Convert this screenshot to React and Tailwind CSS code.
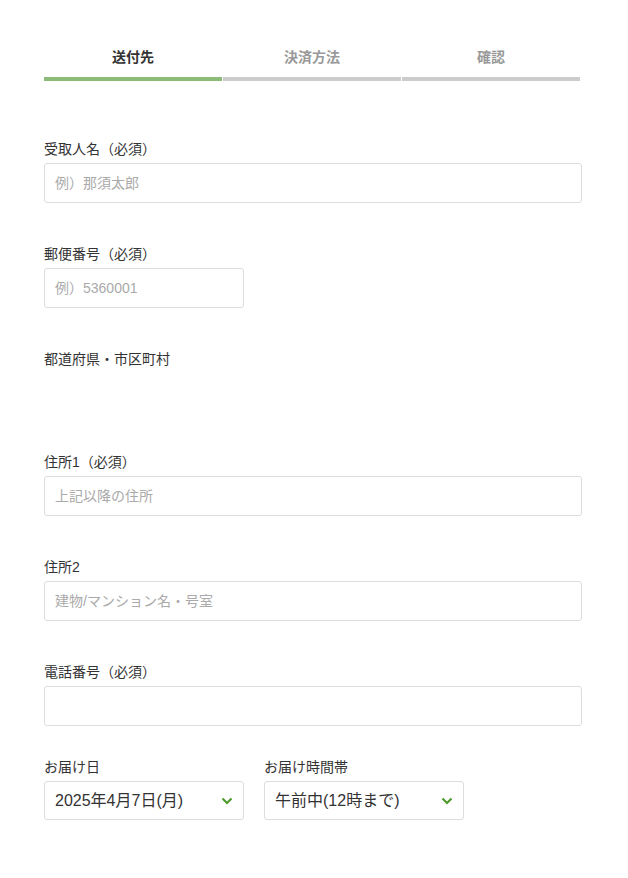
const tabs = [
  { label: "送付先", active: true },
  { label: "決済方法", active: false },
  { label: "確認", active: false },
];

const Chevron = () => (
  <svg width="12" height="8" viewBox="0 0 12 8" className="shrink-0">
    <path d="M1.5 1.5 L6 6 L10.5 1.5" fill="none" stroke="#4f9a2c" strokeWidth="2.2" />
  </svg>
);

const Field = ({ label, placeholder, narrow, last }) => (
  <div className={last ? "mb-[31px]" : "mb-[41px]"}>
    <label className="block h-5 text-[14px] leading-5 text-[#333]">{label}</label>
    <input
      type="text"
      placeholder={placeholder}
      className={`mt-1 block h-10 rounded-[3px] border border-[#dddddd] px-[10px] text-[14px] text-[#333] placeholder:text-[#aaaaaa] outline-none ${narrow ? "w-[200px]" : "w-[538px]"}`}
    />
  </div>
);

const Select = ({ label, value }) => (
  <div className="w-[200px]">
    <label className="block h-5 text-[14px] leading-5 text-[#333]">{label}</label>
    <div className="mt-1 flex h-[39px] items-center justify-between rounded-[3px] border border-[#dddddd] pl-[10px] pr-[10px]">
      <span className="text-[16px] text-[#333]">{value}</span>
      <Chevron />
    </div>
  </div>
);

const App = () => {
  return (
    <div
      className="min-h-[878px] bg-white pl-[44px] pt-[47px]"
      style={{ fontFamily: '"Liberation Sans", "Noto Sans CJK JP", sans-serif' }}
    >
      <div className="flex w-[536px] gap-px">
        {tabs.map((tab) => (
          <div key={tab.label} className="flex-1">
            <div className={`h-5 text-center text-[14px] font-bold leading-5 ${tab.active ? "text-[#333]" : "text-[#999]"}`}>
              {tab.label}
            </div>
            <div className={`mt-[10px] h-[4px] ${tab.active ? "bg-[#8cbb78]" : "bg-[#cccccc]"}`} />
          </div>
        ))}
      </div>

      <div className="pt-[58px]">
        <Field label="受取人名（必須）" placeholder="例）那須太郎" />
        <Field label="郵便番号（必須）" placeholder="例）5360001" narrow />
        <div className="mb-[41px]">
          <label className="block h-5 text-[14px] leading-5 text-[#333]">都道府県・市区町村</label>
          <div className="h-[42px]" />
        </div>
        <Field label="住所1（必須）" placeholder="上記以降の住所" />
        <Field label="住所2" placeholder="建物/マンション名・号室" />
        <Field label="電話番号（必須）" placeholder="" last />
        <div className="flex gap-5">
          <Select label="お届け日" value="2025年4月7日(月)" />
          <Select label="お届け時間帯" value="午前中(12時まで)" />
        </div>
      </div>
    </div>
  );
};

export default App;
